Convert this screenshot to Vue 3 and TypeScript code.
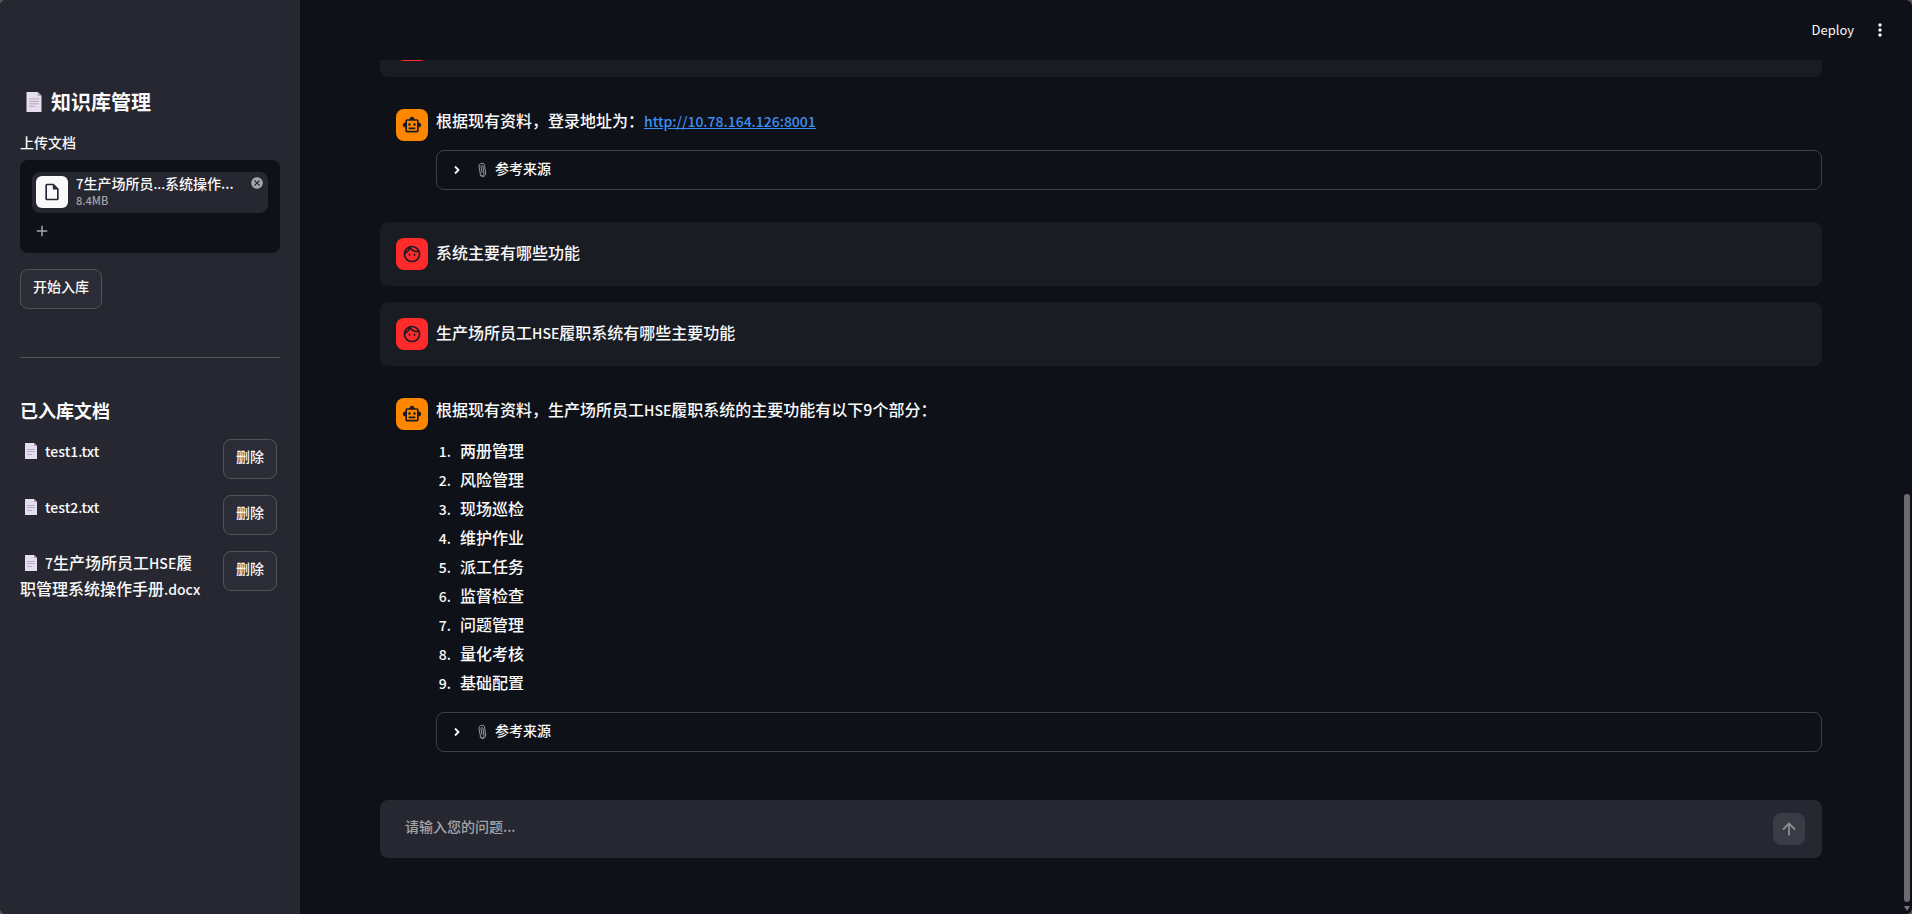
<script setup lang="ts">
import { ref } from 'vue'

interface Message {
  role: 'user' | 'assistant'
  text: string
  latin?: string
  after?: string
  link?: string
  items?: string[]
}

const documents = ref([
  { id: 1, parts: [{ text: 'test1.txt', latin: true }] },
  { id: 2, parts: [{ text: 'test2.txt', latin: true }] },
  {
    id: 3,
    parts: [
      { text: '7', latin: true },
      { text: '生产场所员工', latin: false },
      { text: 'HSE', latin: true },
      { text: '履职管理系统操作手册', latin: false },
      { text: '.docx', latin: true },
    ],
  },
])

const messages = ref<Message[]>([
  { role: 'user', text: '' },
  { role: 'assistant', text: '根据现有资料，登录地址为：', link: 'http://10.78.164.126:8001' },
  { role: 'user', text: '系统主要有哪些功能' },
  { role: 'user', text: '生产场所员工', latin: 'HSE', after: '履职系统有哪些主要功能' },
  {
    role: 'assistant',
    text: '根据现有资料，生产场所员工',
    latin: 'HSE',
    after: '履职系统的主要功能有以下9个部分：',
    items: ['两册管理', '风险管理', '现场巡检', '维护作业', '派工任务', '监督检查', '问题管理', '量化考核', '基础配置'],
  },
])

const question = ref('')

function removeDocument(id: number) {
  documents.value = documents.value.filter((d) => d.id !== id)
}
function send() {
  const text = question.value.trim()
  if (!text) return
  messages.value.push({ role: 'user', text })
  question.value = ''
}
</script>

<template>
  <div class="app">
    <aside class="sidebar">
      <h2 class="title">
        <svg class="page-icon large" viewBox="0 0 12 16" aria-hidden="true">
          <path d="M0 0h9l3 3v13H0z" fill="#e6def0" />
          <path d="M9 0l3 3H9z" fill="#a9a2b8" />
          <path d="M2 5.500h8M2 7.500h8M2 9.500h8M2 11.500h5" stroke="#aaa4b4" stroke-width=".7" />
        </svg>
        <span>知识库管理</span>
      </h2>
      <label class="upload-label" for="upload">上传文档</label>
      <div class="uploader">
        <div class="file">
          <span class="file-icon">
            <svg viewBox="0 0 24 24" width="20" height="20" aria-hidden="true">
              <path d="M14 2H6c-1.100 0-2 .9-2 2v16c0 1.100.9 2 2 2h12c1.100 0 2-.9 2-2V8l-6-6zM6 20V4h7v5h5v11H6z" fill="#262730" />
            </svg>
          </span>
          <span class="file-info">
            <span class="file-name"><span class="latin">7</span>生产场所员<span class="latin">...</span>系统操作...</span>
            <span class="file-size">8.4MB</span>
          </span>
          <button class="file-remove" type="button" aria-label="移除">
            <svg viewBox="0 0 24 24" width="14" height="14" aria-hidden="true">
              <path d="M12 2C6.470 2 2 6.470 2 12s4.470 10 10 10 10-4.470 10-10S17.530 2 12 2zm5 13.590L15.590 17 12 13.410 8.410 17 7 15.590 10.590 12 7 8.410 8.410 7 12 10.590 15.590 7 17 8.410 13.410 12 17 15.590z" fill="#a6a7ab" />
            </svg>
          </button>
        </div>
        <label class="add" for="upload">
          <svg viewBox="0 0 24 24" width="18" height="18" aria-hidden="true">
            <path d="M19 13h-6v6h-2v-6H5v-2h6V5h2v6h6v2z" fill="#a3a4a8" />
          </svg>
        </label>
        <input id="upload" class="upload-input" type="file" />
      </div>
      <button class="btn" type="button">开始入库</button>
      <hr class="rule" />
      <h3 class="subtitle">已入库文档</h3>
      <ul class="docs">
        <li v-for="doc in documents" :key="doc.id" class="doc">
          <span class="doc-name">
            <svg class="page-icon" viewBox="0 0 12 16" aria-hidden="true">
              <path d="M0 0h9l3 3v13H0z" fill="#e6def0" />
              <path d="M9 0l3 3H9z" fill="#a9a2b8" />
              <path d="M2 6.500h8M2 8.500h8M2 11.500h5" stroke="#aaa4b4" stroke-width=".8" />
            </svg><span v-for="(part, i) in doc.parts" :key="i" :class="{ latin: part.latin }">{{ part.text }}</span>
          </span>
          <button class="btn" type="button" @click="removeDocument(doc.id)">删除</button>
        </li>
      </ul>
    </aside>

    <main class="main">
      <header class="toolbar">
        <button class="deploy" type="button">Deploy</button>
        <button class="menu" type="button" aria-label="菜单">
          <svg viewBox="0 0 20 20" width="20" height="20" aria-hidden="true">
            <circle cx="10" cy="5" r="1.700" fill="#fafafa" />
            <circle cx="10" cy="10" r="1.700" fill="#fafafa" />
            <circle cx="10" cy="15" r="1.700" fill="#fafafa" />
          </svg>
        </button>
      </header>

      <section class="messages">
        <article v-for="(m, i) in messages" :key="i" class="message" :class="m.role">
          <span class="avatar">
            <svg v-if="m.role === 'user'" viewBox="0 0 24 24" width="20" height="20" aria-hidden="true">
              <path d="M10.250 13a1.250 1.250 0 1 1-2.500 0 1.250 1.250 0 0 1 2.500 0zM15 11.750a1.250 1.250 0 1 0 0 2.500 1.250 1.250 0 0 0 0-2.500zM22 12c0 5.520-4.480 10-10 10S2 17.520 2 12 6.480 2 12 2s10 4.480 10 10zM10.660 4.120C12.060 6.440 14.600 8 17.500 8c.46 0 .91-.05 1.340-.12C17.440 5.560 14.900 4 12 4c-.46 0-.91.05-1.340.12zM4.420 9.470a8.050 8.050 0 0 0 3.660-4.440 8.040 8.040 0 0 0-3.660 4.440zM20 12c0-.78-.12-1.530-.33-2.240-.7.150-1.420.24-2.170.24a10 10 0 0 1-7.760-3.690A10.020 10.020 0 0 1 4 11.860c.01.040 0 .09 0 .14 0 4.410 3.590 8 8 8s8-3.590 8-8z" />
            </svg>
            <svg v-else viewBox="0 0 24 24" width="20" height="20" aria-hidden="true">
              <path d="M20 9V7c0-1.100-.9-2-2-2h-3c0-1.660-1.340-3-3-3S9 3.340 9 5H6c-1.100 0-2 .9-2 2v2c-1.660 0-3 1.340-3 3s1.340 3 3 3v4c0 1.100.9 2 2 2h12c1.100 0 2-.9 2-2v-4c1.660 0 3-1.340 3-3s-1.340-3-3-3zm-2 10H6V7h12v12zm-9-6c-.83 0-1.500-.67-1.500-1.500S8.170 10 9 10s1.500.67 1.500 1.500S9.830 13 9 13zm7.500-1.500c0 .83-.67 1.500-1.500 1.500s-1.500-.67-1.500-1.500.67-1.500 1.500-1.500 1.500.67 1.500 1.500zM8 15h8v2H8v-2z" />
            </svg>
          </span>
          <div class="content">
            <p>{{ m.text }}<span v-if="m.latin" class="latin">{{ m.latin }}</span>{{ m.after }}<a v-if="m.link" class="latin" :href="m.link">{{ m.link }}</a></p>
            <ol v-if="m.items">
              <li v-for="item in m.items" :key="item">{{ item }}</li>
            </ol>
            <details v-if="m.role === 'assistant'" class="sources">
              <summary>
                <svg class="chevron" viewBox="0 0 8 10" width="8" height="10" aria-hidden="true">
                  <path d="M2 1.500L5.500 5 2 8.500" fill="none" stroke="#fafafa" stroke-width="1.800" />
                </svg>
                <svg viewBox="0 0 10 16" width="10" height="16" aria-hidden="true">
                  <path d="M2 5l1.500 7.500a1.800 1.800 0 0 0 3.500-.5L6 4.500a1 1 0 0 0-2 .3l1 6M2 5C1.500 1 6.500 0 7.500 3l1.200 8c.3 4-4.700 5-5.700 1.500" fill="none" stroke="#aaa6ae" stroke-width=".9" />
                </svg>
                <span>参考来源</span>
              </summary>
            </details>
          </div>
        </article>
      </section>

      <form class="ask" @submit.prevent="send">
        <input v-model="question" type="text" placeholder="请输入您的问题..." aria-label="请输入您的问题" />
        <button type="submit" aria-label="发送">
          <svg viewBox="0 0 16 16" width="16" height="16" aria-hidden="true">
            <path d="M8 14.500V2.500M2 8.500l6-6 6 6" fill="none" stroke="#8b8c94" stroke-width="1.800" />
          </svg>
        </button>
      </form>
    </main>

    <div class="scrollbar" aria-hidden="true">
      <span class="thumb"></span>
      <svg viewBox="0 0 6 5" width="6" height="5"><path d="M0 0h6L3 5z" fill="#77787a" /></svg>
    </div>
  </div>
</template>

<style>
body {
  background: #55575a;
}
</style>

<style scoped>
* {
  box-sizing: border-box;
}
.app {
  position: relative;
  display: flex;
  height: 100vh;
  overflow: hidden;
  border-radius: 6px;
  background: #0e1117;
  color: #fafafa;
  font: 500 16px/25px "Noto Sans CJK SC", sans-serif;
}
button {
  font: inherit;
  color: inherit;
  cursor: pointer;
}
.latin {
  font-size: 14px;
}
.sidebar {
  flex: 0 0 300px;
  padding: 87px 20px 0;
  background: #262730;
}
.title {
  display: flex;
  align-items: center;
  gap: 9px;
  margin: 0;
  padding-left: 6px;
  font-size: 20px;
  line-height: 30px;
  font-weight: 700;
}
.page-icon {
  width: 12px;
  height: 16px;
  margin: 0 8px 0 5px;
  vertical-align: -2px;
}
.page-icon.large {
  width: 16px;
  height: 20px;
  margin: 0;
}
.upload-label {
  display: block;
  margin: 15px 0 8px;
  font-size: 14px;
  line-height: 20px;
}
.uploader {
  position: relative;
  padding: 12px;
  margin-bottom: 16px;
  border-radius: 8px;
  background: #0e1117;
}
.file {
  display: flex;
  gap: 8px;
  padding: 4px;
  border-radius: 8px;
  background: #262730;
}
.file-icon {
  display: grid;
  place-items: center;
  flex: 0 0 32px;
  height: 32px;
  border-radius: 6px;
  background: #fafafa;
}
.file-info {
  flex: 1;
  min-width: 0;
  white-space: nowrap;
}
.file-name,
.file-size {
  display: block;
}
.file-name {
  font-size: 14px;
  line-height: 15px;
}
.file-name .latin {
  font-size: 13px;
}
.file-size {
  font-size: 11px;
  line-height: 18px;
  color: #a3a4a8;
}
.file-remove {
  align-self: flex-start;
  display: flex;
  padding: 0;
  border: 0;
  background: none;
}
.add {
  display: flex;
  width: 18px;
  margin: 9px 0 1px 1px;
}
.upload-input {
  position: absolute;
  inset: 0;
  opacity: 0;
  pointer-events: none;
}
.btn {
  height: 40px;
  padding: 0 12px 6px;
  border: 1px solid #51525a;
  border-radius: 8px;
  background: #2b2c36;
  font-size: 14px;
  line-height: 20px;
}
.rule {
  height: 1px;
  margin: 48px 0;
  border: 0;
  background: #51525a;
}
.subtitle {
  margin: -9px 0 15px;
  font-size: 18px;
  line-height: 27px;
  font-weight: 700;
}
.docs {
  display: grid;
  gap: 16px;
  margin: 0;
  padding: 0;
  list-style: none;
}
.doc {
  display: flex;
  align-items: flex-start;
  gap: 20px;
  height: 40px;
}
.doc-name {
  flex: 0 0 183px;
  margin-top: -1px;
}
.main {
  flex: 1;
  min-width: 0;
  display: flex;
  flex-direction: column;
  padding: 0 90px 0 80px;
}
.toolbar {
  display: flex;
  flex: 0 0 60px;
  align-items: center;
  justify-content: flex-end;
  gap: 16px;
  margin-right: -68px;
}
.toolbar button {
  display: flex;
  padding: 0;
  border: 0;
  background: none;
  font-size: 13px;
}
.toolbar .deploy {
  padding-bottom: 2px;
  font-weight: 400;
}
.messages {
  flex: 1;
  min-height: 0;
  display: flex;
  flex-direction: column;
  justify-content: flex-end;
  gap: 16px;
  overflow: hidden;
}
.message {
  flex: none;
  display: flex;
  gap: 8px;
  padding: 16px 0 16px 16px;
  border-radius: 8px;
}
.user {
  align-items: center;
  background: #1a1c24;
}
.avatar {
  display: grid;
  place-items: center;
  flex: 0 0 32px;
  height: 32px;
  border-radius: 8px;
  background: #ff8700;
  fill: #1a1c24;
}
.user .avatar {
  background: #ff2b2b;
}
.content {
  flex: 1;
  min-width: 0;
}
.content p {
  margin: 0;
  padding-bottom: 1px;
  line-height: 23px;
}
.user .content p {
  padding-bottom: 3px;
}
.content a {
  color: #3b90f5;
}
.content ol {
  display: grid;
  gap: 2px;
  margin: 14px 0 0;
  padding-left: 18px;
  line-height: 27px;
}
.content li {
  padding-left: 6px;
}
.content li::marker {
  font-size: 14px;
}
.sources {
  margin-top: 16px;
  border: 1px solid #3d4045;
  border-radius: 8px;
}
.sources summary {
  display: flex;
  align-items: center;
  height: 38px;
  padding: 0 16px;
  list-style: none;
  font-size: 14px;
  line-height: 20px;
}
.chevron {
  margin-right: 16px;
}
.sources span {
  margin-left: 8px;
  padding-bottom: 4px;
}
.ask {
  display: flex;
  align-items: center;
  flex: 0 0 58px;
  margin: 32px 0 56px;
  padding: 0 17px 0 25px;
  border-radius: 8px;
  background: #262730;
}
.ask input {
  flex: 1;
  min-width: 0;
  padding: 0 0 6px;
  border: 0;
  outline: 0;
  background: none;
  color: inherit;
  font: inherit;
  font-size: 14px;
}
.ask input::placeholder {
  color: #a3a4a8;
}
.ask button {
  display: grid;
  place-items: center;
  width: 32px;
  height: 32px;
  padding: 0;
  border: 0;
  border-radius: 8px;
  background: #3b3b46;
}
.scrollbar {
  position: absolute;
  right: 2px;
  bottom: 3px;
  top: 54%;
  width: 6px;
  display: flex;
  flex-direction: column;
  gap: 4px;
}
.thumb {
  flex: 1;
  border-radius: 3px;
  background: #6b6c6f;
}
</style>
